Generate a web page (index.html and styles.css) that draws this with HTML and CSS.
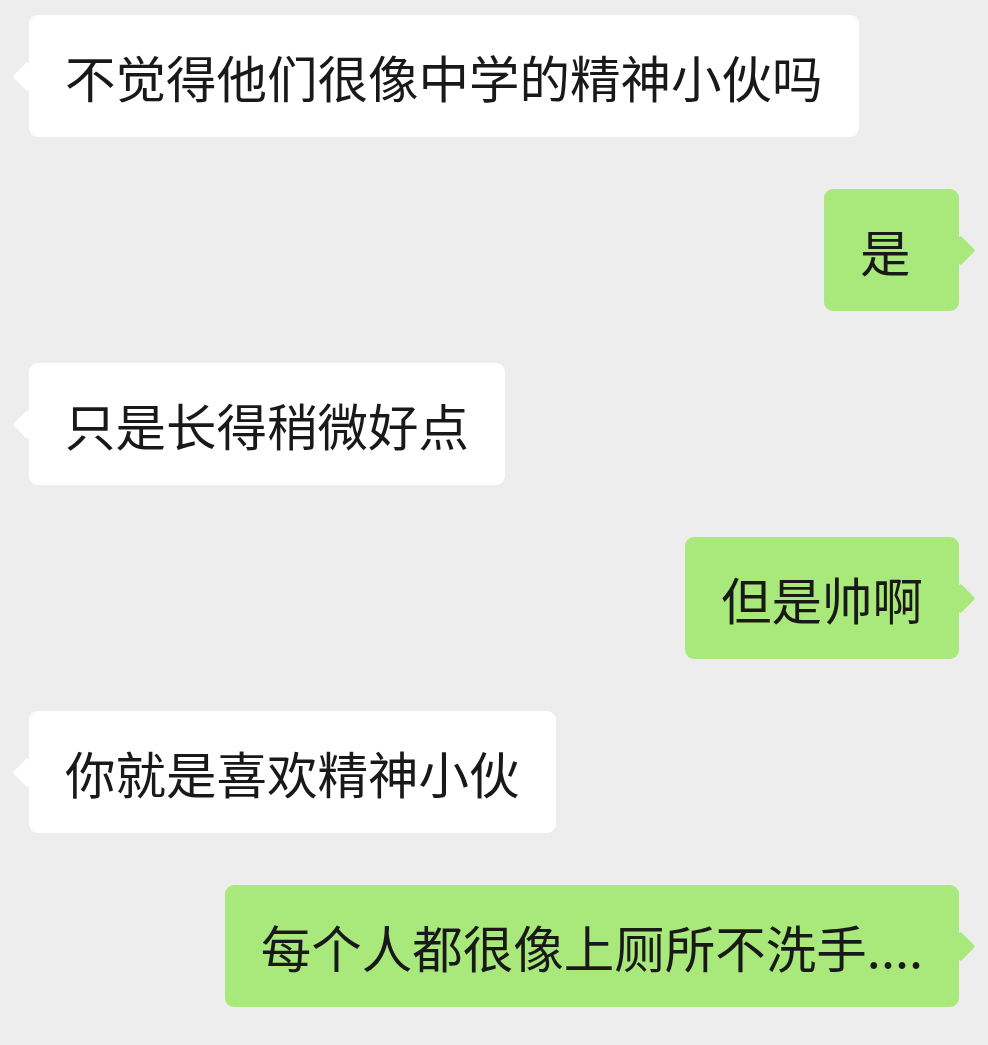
FILE: index.html
```html
<!DOCTYPE html>
<html lang="zh-CN">

<head>
  <meta charset="UTF-8">
  <meta name="viewport" content="width=device-width, initial-scale=1.0">
  <title>聊天</title>
  <link rel="stylesheet" href="styles.css">
</head>

<body>
  <div class="chat">
    <div class="msg msgLeft">
      <div class="bubble">不觉得他们很像中学的精神小伙吗</div>
    </div>
    <div class="msg msgRight">
      <div class="bubble">是</div>
    </div>
    <div class="msg msgLeft">
      <div class="bubble">只是长得稍微好点</div>
    </div>
    <div class="msg msgRight">
      <div class="bubble">但是帅啊</div>
    </div>
    <div class="msg msgLeft">
      <div class="bubble">你就是喜欢精神小伙</div>
    </div>
    <div class="msg msgRight">
      <div class="bubble">每个人都很像上厕所不洗手....</div>
    </div>
  </div>
</body>

</html>
```

FILE: styles.css
```css
:root {
  --pageBg: #ededed;
  --leftBg: #ffffff;
  --rightBg: #a9e87a;
  --textColor: #191919;
}

body {
  margin: 0;
  background: var(--pageBg);
  font-family: "Noto Sans CJK SC", "Noto Sans", sans-serif;
  color: var(--textColor);
}

.chat {
  display: flex;
  flex-direction: column;
  gap: 52px;
  padding: 15px 29px;
}

.msg {
  display: flex;
}

.msgLeft {
  justify-content: flex-start;
}

.msgRight {
  justify-content: flex-end;
}

.bubble {
  position: relative;
  height: 122px;
  min-width: 135px;
  box-sizing: border-box;
  padding: 0 36px;
  display: flex;
  align-items: center;
  border-radius: 9px;
  font-size: 50.5px;
  white-space: nowrap;
}

/* little tail pointing at the speaker */
.bubble::before {
  content: "";
  position: absolute;
  top: 50%;
  width: 21px;
  height: 21px;
  margin-top: -10.5px;
  border-radius: 2px;
  transform: rotate(45deg);
}

.msgLeft .bubble {
  background: var(--leftBg);
}

.msgLeft .bubble::before {
  left: -12px;
  background: var(--leftBg);
}

.msgRight .bubble {
  background: var(--rightBg);
}

.msgRight .bubble::before {
  right: -12px;
  background: var(--rightBg);
}
```
